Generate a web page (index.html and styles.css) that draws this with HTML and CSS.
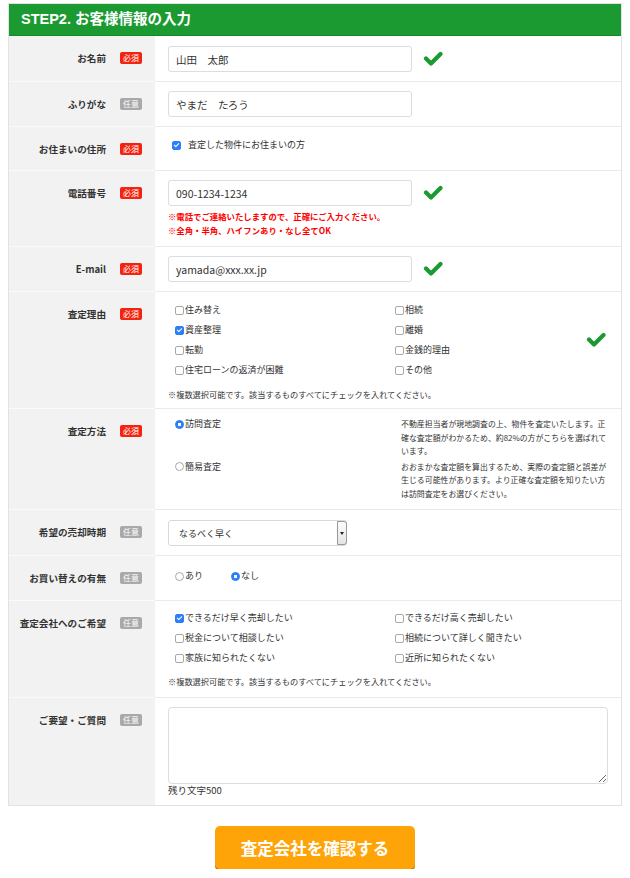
FILE: index.html
```html
<!DOCTYPE html>
<html lang="ja">
<head>
    <meta charset="UTF-8">
    <meta name="viewport" content="width=device-width, initial-scale=1.0">
    <title>お客様情報の入力</title>
    <link rel="stylesheet" href="styles.css">
</head>
<body>
    <div class="form-box">
        <h2 class="step-title">STEP2. お客様情報の入力</h2>
        <table class="form-table">
            <tr>
                <th>お名前<span class="badge req">必須</span></th>
                <td class="field-cell">
                    <div class="input-row">
                        <input class="text-input" type="text" value="山田　太郎">
                        <svg class="ok-icon" viewBox="0 0 20 16"><path d="M3 7.5 L8 12.5 L17.5 3"/></svg>
                    </div>
                </td>
            </tr>
            <tr>
                <th>ふりがな<span class="badge opt">任意</span></th>
                <td><input class="text-input" type="text" value="やまだ　たろう"></td>
            </tr>
            <tr>
                <th>お住まいの住所<span class="badge req">必須</span></th>
                <td>
                    <label class="single-check"><input type="checkbox" checked>査定した物件にお住まいの方</label>
                </td>
            </tr>
            <tr>
                <th>電話番号<span class="badge req">必須</span></th>
                <td>
                    <div class="input-row">
                        <input class="text-input" type="text" value="090-1234-1234">
                        <svg class="ok-icon" viewBox="0 0 20 16"><path d="M3 7.5 L8 12.5 L17.5 3"/></svg>
                    </div>
                    <p class="note-red first">※電話でご連絡いたしますので、正確にご入力ください。</p>
                    <p class="note-red">※全角・半角、ハイフンあり・なし全てOK</p>
                </td>
            </tr>
            <tr>
                <th>E-mail<span class="badge req">必須</span></th>
                <td>
                    <div class="input-row">
                        <input class="text-input" type="text" value="yamada@xxx.xx.jp">
                        <svg class="ok-icon" viewBox="0 0 20 16"><path d="M3 7.5 L8 12.5 L17.5 3"/></svg>
                    </div>
                </td>
            </tr>
            <tr>
                <th>査定理由<span class="badge req">必須</span></th>
                <td class="list-cell">
                    <div class="check-area">
                        <div class="check-grid">
                            <label class="check-item"><input type="checkbox">住み替え</label>
                            <label class="check-item"><input type="checkbox">相続</label>
                            <label class="check-item"><input type="checkbox" checked>資産整理</label>
                            <label class="check-item"><input type="checkbox">離婚</label>
                            <label class="check-item"><input type="checkbox">転勤</label>
                            <label class="check-item"><input type="checkbox">金銭的理由</label>
                            <label class="check-item"><input type="checkbox">住宅ローンの返済が困難</label>
                            <label class="check-item"><input type="checkbox">その他</label>
                        </div>
                        <svg class="ok-icon" viewBox="0 0 20 16"><path d="M3 7.5 L8 12.5 L17.5 3"/></svg>
                    </div>
                    <p class="note">※複数選択可能です。該当するものすべてにチェックを入れてください。</p>
                </td>
            </tr>
            <tr>
                <th>査定方法<span class="badge req">必須</span></th>
                <td class="method-cell">
                    <div class="method-item">
                        <label class="method-label"><input type="radio" name="method" checked>訪問査定</label>
                        <p class="method-desc">不動産担当者が現地調査の上、物件を査定いたします。正確な査定額がわかるため、約82%の方がこちらを選ばれています。</p>
                    </div>
                    <div class="method-item">
                        <label class="method-label"><input type="radio" name="method">簡易査定</label>
                        <p class="method-desc">おおまかな査定額を算出するため、実際の査定額と誤差が生じる可能性があります。より正確な査定額を知りたい方は訪問査定をお選びください。</p>
                    </div>
                </td>
            </tr>
            <tr>
                <th>希望の売却時期<span class="badge opt">任意</span></th>
                <td class="field-cell">
                    <span class="select-wrap">
                        <select>
                            <option>なるべく早く</option>
                            <option>3ヶ月以内</option>
                            <option>半年以内</option>
                            <option>1年以内</option>
                        </select>
                    </span>
                </td>
            </tr>
            <tr>
                <th>お買い替えの有無<span class="badge opt">任意</span></th>
                <td class="radio-cell">
                    <div class="radio-row">
                        <label class="radio-item"><input type="radio" name="replace">あり</label>
                        <label class="radio-item"><input type="radio" name="replace" checked>なし</label>
                    </div>
                </td>
            </tr>
            <tr>
                <th>査定会社へのご希望<span class="badge opt">任意</span></th>
                <td class="list-cell wish-cell">
                    <div class="check-grid">
                        <label class="check-item"><input type="checkbox" checked>できるだけ早く売却したい</label>
                        <label class="check-item"><input type="checkbox">できるだけ高く売却したい</label>
                        <label class="check-item"><input type="checkbox">税金について相談したい</label>
                        <label class="check-item"><input type="checkbox">相続について詳しく聞きたい</label>
                        <label class="check-item"><input type="checkbox">家族に知られたくない</label>
                        <label class="check-item"><input type="checkbox">近所に知られたくない</label>
                    </div>
                    <p class="note">※複数選択可能です。該当するものすべてにチェックを入れてください。</p>
                </td>
            </tr>
            <tr>
                <th>ご要望・ご質問<span class="badge opt">任意</span></th>
                <td>
                    <textarea class="request-text"></textarea>
                    <p class="count">残り文字500</p>
                </td>
            </tr>
        </table>
    </div>

    <div class="submit-area">
        <button class="submit-btn">査定会社を確認する</button>
    </div>
</body>
</html>
```

FILE: styles.css
```css
body {
    margin: 3px 8px 0;
    font-family: "Noto Sans CJK JP", sans-serif;
    color: #333;
    background-color: #fff;
}
p {
    margin: 0;
}
.form-box {
    border: 1px solid #e2e2e2;
}
.step-title {
    margin: 0;
    height: 31px;
    line-height: 31px;
    padding: 0 12px;
    background-color: #1a9a31;
    border-bottom: 1px solid #14892a;
    color: #fff;
    font-family: "Liberation Sans", "Noto Sans CJK JP", sans-serif;
    font-size: 14.5px;
    font-weight: bold;
}
.form-table {
    width: 100%;
    border-collapse: collapse;
    table-layout: fixed;
}
.form-table th {
    width: 126px;
    padding: 13px 13px 12px 7px;
    background-color: #f2f2f2;
    border-bottom: 1px solid #fafafa;
    text-align: right;
    vertical-align: top;
    font-size: 9.6px;
    line-height: 18px;
    font-weight: bold;
    white-space: nowrap;
}
.form-table td {
    padding: 9px 13px;
    border-bottom: 1px solid #ebebeb;
    vertical-align: top;
    font-size: 9px;
    line-height: 18px;
}
.form-table td.field-cell {
    padding-top: 10px;
}
.form-table tr:last-child th,
.form-table tr:last-child td {
    border-bottom: 0;
}
.badge {
    display: inline-block;
    width: 22px;
    height: 12px;
    line-height: 12px;
    margin-left: 14px;
    border-radius: 2px;
    color: #fff;
    font-size: 8px;
    font-weight: normal;
    text-align: center;
    vertical-align: 1px;
}
.badge.req {
    background-color: #f4230f;
}
.badge.opt {
    background-color: #a9a9a9;
}

/* text inputs */
.input-row {
    display: flex;
    align-items: center;
    gap: 11px;
}
.text-input {
    box-sizing: border-box;
    width: 244px;
    height: 26px;
    padding: 0 7px;
    border: 1px solid #dcdce3;
    border-radius: 3px;
    font-family: inherit;
    font-size: 10.5px;
    color: #333;
    vertical-align: middle;
}
.ok-icon {
    flex: none;
    width: 20px;
    height: 16px;
}
.ok-icon path {
    fill: none;
    stroke: #1a9a31;
    stroke-width: 4.2;
    stroke-linecap: round;
    stroke-linejoin: round;
}
.note-red {
    color: #f00;
    font-size: 8.4px;
    font-weight: bold;
    line-height: 14px;
}
.note-red.first {
    margin-top: 3px;
}

/* checkboxes and radios */
input[type="checkbox"],
input[type="radio"] {
    appearance: none;
    box-sizing: border-box;
    flex: none;
    position: relative;
    width: 9px;
    height: 9px;
    margin: 0 1px 0 0;
    border: 1px solid #a8a8a8;
    background-color: #fff;
}
input[type="checkbox"] {
    border-radius: 2px;
}
input[type="checkbox"]:checked {
    background-color: #2d7ff9;
    border-color: #2d7ff9;
}
input[type="checkbox"]:checked::after {
    content: "";
    position: absolute;
    left: 2px;
    top: 0;
    width: 2px;
    height: 4px;
    border: solid #fff;
    border-width: 0 1.5px 1.5px 0;
    transform: rotate(45deg);
}
input[type="radio"] {
    border-radius: 50%;
}
input[type="radio"]:checked {
    border-color: #2d7ff9;
    background: radial-gradient(circle, #fff 0 1.4px, #2d7ff9 2px);
}
.single-check {
    display: flex;
    align-items: center;
}
.single-check input {
    margin: 0 7px 0 4px;
}
.form-table td.list-cell {
    padding-top: 8px;
    padding-bottom: 7px;
}
.form-table td.wish-cell {
    padding-top: 7px;
    padding-bottom: 9px;
}
.check-area {
    display: flex;
    align-items: center;
}
.check-grid {
    flex: 1;
    display: grid;
    grid-template-columns: 220px 1fr;
    padding-left: 7px;
}
.check-area .ok-icon {
    margin-right: 2px;
}
.check-item {
    display: flex;
    align-items: center;
    line-height: 20px;
}
.note {
    margin-top: 7px;
    font-size: 8.2px;
    line-height: 14px;
}
.wish-cell .note {
    margin-top: 6px;
}

/* appraisal method */
.form-table td.method-cell {
    padding-top: 8px;
}
.method-item {
    display: flex;
}
.method-item + .method-item {
    margin-top: 2px;
}
.method-label {
    display: flex;
    align-items: center;
    align-self: flex-start;
    width: 227px;
    padding-left: 7px;
    line-height: 14px;
}
.method-desc {
    width: 26.3em;
    font-size: 7.9px;
    line-height: 13.5px;
}

/* select */
.select-wrap {
    display: inline-block;
    position: relative;
    vertical-align: top;
}
.select-wrap select {
    appearance: none;
    display: block;
    box-sizing: border-box;
    width: 179px;
    height: 26px;
    padding: 0 10px;
    border: 1px solid #d8d8de;
    border-radius: 3px;
    background-color: #fff;
    font-family: inherit;
    font-size: 9px;
    color: #333;
}
.select-wrap::after {
    content: "";
    position: absolute;
    right: 0;
    top: 1px;
    bottom: 1px;
    width: 8px;
    border: 1px solid #999;
    border-radius: 0 3px 3px 0;
    background: linear-gradient(#fdfdfd, #e4e4e4);
}
.select-wrap::before {
    content: "";
    position: absolute;
    right: 3px;
    top: 12px;
    z-index: 1;
    border-left: 2px solid transparent;
    border-right: 2px solid transparent;
    border-top: 3px solid #222;
}

.form-table td.radio-cell {
    padding-bottom: 13px;
}
.radio-row {
    display: flex;
    gap: 28px;
    padding-left: 7px;
    line-height: 22px;
}
.radio-item {
    display: flex;
    align-items: center;
}

/* free text */
.request-text {
    display: block;
    box-sizing: border-box;
    width: 100%;
    height: 77px;
    border: 1px solid #dcdce3;
    border-radius: 4px;
    resize: vertical;
    font-family: inherit;
}
.count {
    font-size: 9.5px;
    line-height: 12px;
}

.submit-area {
    text-align: center;
    padding-top: 20px;
}
.submit-btn {
    width: 200px;
    height: 43px;
    border: 0;
    border-radius: 5px;
    background-color: #ffa408;
    box-shadow: 0 2px 0 #c27d0b;
    color: #fff;
    font-family: inherit;
    font-size: 16.5px;
    font-weight: bold;
}
```
